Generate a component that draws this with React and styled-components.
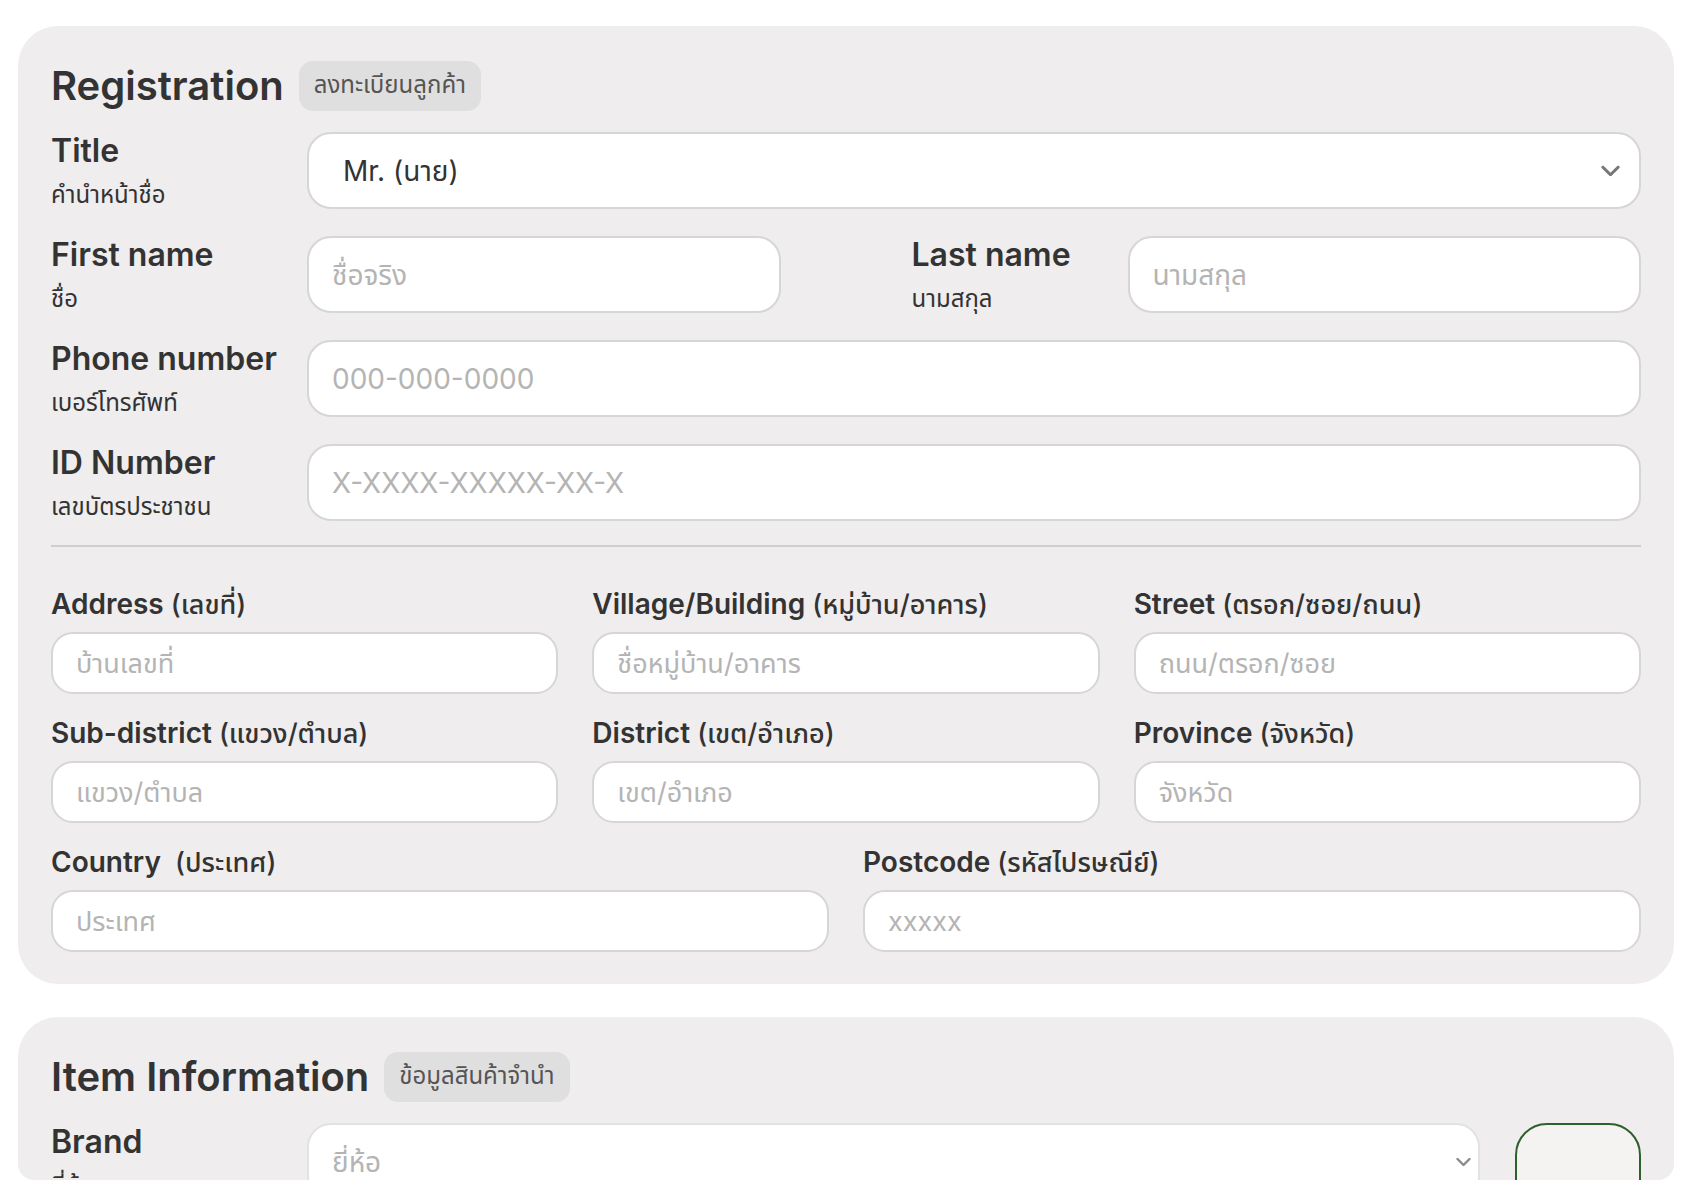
import styled, { createGlobalStyle } from "styled-components";

// registration form, two cards in a clipped scroll area
const GlobalStyle = createGlobalStyle`
  * {
    box-sizing: border-box;
  }
  body {
    margin: 0;
    background: #ffffff;
    font-family: Inter, "Noto Sans Thai", "Noto Sans", sans-serif;
    color: #333333;
  }
`;

const addressFields = [
  { label: "Address", thai: "(เลขที่)", placeholder: "บ้านเลขที่" },
  { label: "Village/Building", thai: "(หมู่บ้าน/อาคาร)", placeholder: "ชื่อหมู่บ้าน/อาคาร" },
  { label: "Street", thai: "(ตรอก/ซอย/ถนน)", placeholder: "ถนน/ตรอก/ซอย" },
  { label: "Sub-district", thai: "(แขวง/ตำบล)", placeholder: "แขวง/ตำบล" },
  { label: "District", thai: "(เขต/อำเภอ)", placeholder: "เขต/อำเภอ" },
  { label: "Province", thai: "(จังหวัด)", placeholder: "จังหวัด" },
];

const Chevron = ({ size = 19, color = "#777777", right = 21 }) => (
  <ChevronIcon
    width={size}
    height={size * 0.6}
    viewBox="0 0 20 12"
    fill="none"
    $right={right}
  >
    <polyline
      points="2,2 10,10 18,2"
      stroke={color}
      strokeWidth="3.2"
      strokeLinecap="round"
      strokeLinejoin="round"
    />
  </ChevronIcon>
);

const LabelBlock = ({ title, sub }) => (
  <Labels>
    <MainLabel>{title}</MainLabel>
    <SubLabel>{sub}</SubLabel>
  </Labels>
);

const AddressField = ({ label, thai, placeholder }) => (
  <Field>
    <FieldLabel>
      {label} <Thai>{thai}</Thai>
    </FieldLabel>
    <SmallInput placeholder={placeholder} />
  </Field>
);

const App = () => {
  return (
    <Page>
      <GlobalStyle />
      <Viewport>
        <Card>
          <CardHeader>
            <Heading>Registration</Heading>
            <Badge>ลงทะเบียนลูกค้า</Badge>
          </CardHeader>

          <TopRows>
            <FieldRow>
              <LabelBlock title="Title" sub="คำนำหน้าชื่อ" />
              <SelectWrap>
                <Select defaultValue="mr">
                  <option value="mr">Mr. (นาย)</option>
                  <option value="mrs">Mrs. (นาง)</option>
                  <option value="ms">Ms. (นางสาว)</option>
                </Select>
                <Chevron />
              </SelectWrap>
            </FieldRow>

            <HalfPair>
              <NameHalf $label={256}>
                <LabelBlock title="First name" sub="ชื่อ" />
                <BigInput placeholder="ชื่อจริง" />
              </NameHalf>
              <NameHalf $label={216}>
                <LabelBlock title="Last name" sub="นามสกุล" />
                <BigInput placeholder="นามสกุล" />
              </NameHalf>
            </HalfPair>

            <FieldRow>
              <LabelBlock title="Phone number" sub="เบอร์โทรศัพท์" />
              <BigInput placeholder="000-000-0000" />
            </FieldRow>

            <FieldRow>
              <LabelBlock title="ID Number" sub="เลขบัตรประชาชน" />
              <BigInput placeholder="X-XXXX-XXXXX-XX-X" />
            </FieldRow>
          </TopRows>

          <Divider />

          <AddressGrid>
            {addressFields.map((f) => (
              <AddressField key={f.label} {...f} />
            ))}
          </AddressGrid>

          <BottomGrid>
            <AddressField label={"Country\u00a0"} thai="(ประเทศ)" placeholder="ประเทศ" />
            <AddressField label="Postcode" thai="(รหัสไปรษณีย์)" placeholder="xxxxx" />
          </BottomGrid>
        </Card>

        <Card>
          <CardHeader>
            <Heading>Item Information</Heading>
            <Badge>ข้อมูลสินค้าจำนำ</Badge>
          </CardHeader>

          <FieldRow>
            <LabelBlock title="Brand" sub="ยี่ห้อ" />
            <BrandCell>
              <SelectWrap>
                <Select defaultValue="" $muted>
                  <option value="" disabled>
                    ยี่ห้อ
                  </option>
                </Select>
                <Chevron size={15} color="#8a8a8a" right={9} />
              </SelectWrap>
              <PhotoBox />
            </BrandCell>
          </FieldRow>
        </Card>
      </Viewport>
    </Page>
  );
};

export default App;

const Page = styled.div`
  padding: 26px 18px 0;
`;

const Viewport = styled.div`
  height: 1154px;
  overflow: hidden;
  border-radius: 0 0 16px 16px;
  display: flex;
  flex-direction: column;
  gap: 33px;
`;

const Card = styled.section`
  flex-shrink: 0;
  background: #efedee;
  border-radius: 40px;
  padding: 35px 33px 32px;
`;

const CardHeader = styled.div`
  display: flex;
  align-items: center;
  gap: 15px;
  margin-bottom: 21px;
`;

const Heading = styled.h2`
  margin: 0;
  font-size: 40px;
  font-weight: 600;
  line-height: 48px;
  color: #333333;
`;

const Badge = styled.span`
  display: flex;
  align-items: center;
  height: 50px;
  padding: 0 15px;
  border-radius: 14px;
  background: #e0dfdf;
  color: #555555;
  font-size: 24px;
`;

const TopRows = styled.div`
  display: flex;
  flex-direction: column;
  gap: 27px;
`;

const FieldRow = styled.div`
  display: grid;
  grid-template-columns: 256px 1fr;
  align-items: start;
`;

const HalfPair = styled.div`
  display: grid;
  grid-template-columns: 1fr 1fr;
  column-gap: 131px;
`;

const NameHalf = styled.div`
  display: grid;
  grid-template-columns: ${(p) => p.$label}px 1fr;
  align-items: start;
`;

const Labels = styled.div`
  display: flex;
  flex-direction: column;
  height: 77px;
`;

const MainLabel = styled.span`
  font-size: 32px;
  font-weight: 600;
  line-height: 38px;
  color: #333333;
`;

const SubLabel = styled.span`
  margin-top: 10px;
  font-size: 24px;
  line-height: 30px;
  color: #333333;
  white-space: nowrap;
`;

const BigInput = styled.input`
  width: 100%;
  height: 77px;
  padding: 0 23px;
  border: 2px solid #d6d6d6;
  border-radius: 24px;
  background: #ffffff;
  font-family: Inter, "Noto Sans Thai", "Noto Sans", sans-serif;
  font-size: 28px;
  color: #333333;
  outline: none;

  &::placeholder {
    color: #b4b4b4;
  }
`;

const SelectWrap = styled.div`
  position: relative;
  width: 100%;
`;

const Select = styled.select`
  width: 100%;
  height: 77px;
  padding: 0 60px 0 ${(p) => (p.$muted ? "23px" : "34px")};
  border: 2px solid ${(p) => (p.$muted ? "#e2e2e2" : "#d6d6d6")};
  border-radius: 24px;
  background: #ffffff;
  appearance: none;
  font-family: Inter, "Noto Sans Thai", "Noto Sans", sans-serif;
  font-size: 28px;
  color: ${(p) => (p.$muted ? "#b4b4b4" : "#333333")};
  outline: none;
`;

const ChevronIcon = styled.svg`
  position: absolute;
  right: ${(p) => p.$right}px;
  top: 50%;
  transform: translateY(-50%);
  pointer-events: none;
`;

const Divider = styled.div`
  height: 2px;
  background: #d0cfcf;
  margin: 24px 0 37px;
`;

const AddressGrid = styled.div`
  display: grid;
  grid-template-columns: repeat(3, 1fr);
  column-gap: 34px;
  row-gap: 19px;
`;

const BottomGrid = styled.div`
  display: grid;
  grid-template-columns: 1fr 1fr;
  column-gap: 34px;
  margin-top: 19px;
`;

const Field = styled.div`
  display: flex;
  flex-direction: column;
  gap: 7px;
`;

const FieldLabel = styled.label`
  font-size: 28px;
  font-weight: 600;
  line-height: 40px;
  color: #333333;
  white-space: nowrap;
`;

const Thai = styled.span`
  font-size: 27px;
  font-weight: 500;
`;

const SmallInput = styled.input`
  width: 100%;
  height: 62px;
  padding: 0 23px;
  border: 2px solid #d6d6d6;
  border-radius: 22px;
  background: #ffffff;
  font-family: Inter, "Noto Sans Thai", "Noto Sans", sans-serif;
  font-size: 27px;
  color: #333333;
  outline: none;

  &::placeholder {
    color: #b4b4b4;
  }
`;

const BrandCell = styled.div`
  display: flex;
  align-items: flex-start;
  gap: 35px;
`;

const PhotoBox = styled.div`
  flex-shrink: 0;
  width: 126px;
  height: 126px;
  border: 2px solid #2f5f2b;
  border-radius: 32px;
  background: #f4f3f2;
`;
